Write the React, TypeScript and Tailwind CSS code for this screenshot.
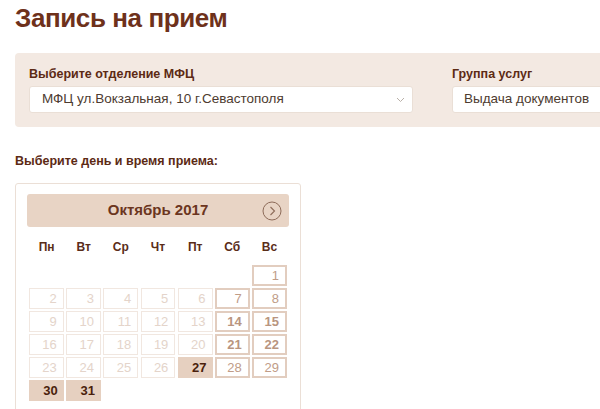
import React from "react";

const weekDays = ["Пн", "Вт", "Ср", "Чт", "Пт", "Сб", "Вс"];

type DayState = "off" | "open" | "strong" | "picked";

// октябрь 2017 начинается с воскресенья
const days: { n: number; s: DayState }[] = [
  { n: 1, s: "open" },
  ...[2, 3, 4, 5, 6].map((n) => ({ n, s: "off" as DayState })),
  { n: 7, s: "open" },
  { n: 8, s: "open" },
  ...[9, 10, 11, 12, 13].map((n) => ({ n, s: "off" as DayState })),
  { n: 14, s: "strong" },
  { n: 15, s: "strong" },
  ...[16, 17, 18, 19, 20].map((n) => ({ n, s: "off" as DayState })),
  { n: 21, s: "strong" },
  { n: 22, s: "strong" },
  ...[23, 24, 25, 26].map((n) => ({ n, s: "off" as DayState })),
  { n: 27, s: "picked" },
  { n: 28, s: "open" },
  { n: 29, s: "open" },
  { n: 30, s: "picked" },
  { n: 31, s: "picked" },
];

const cellClass: Record<DayState, string> = {
  off: "border border-[#f1e7e0] text-[#e4d4ca]",
  open: "border-2 border-[#e2cdbf] text-[#c09c87]",
  strong: "border-2 border-[#e2cdbf] text-[#b99580] font-bold",
  picked: "bg-[#e6d0c0] text-[#4a1f0c] font-bold",
};

const Chevron = () => (
  <svg width="9" height="6" viewBox="0 0 9 6" className="text-[#b9b0a8]">
    <path d="M1 1l3.5 3.5L8 1" fill="none" stroke="currentColor" strokeWidth="1" />
  </svg>
);

const NextIcon = () => (
  <svg width="20" height="20" viewBox="0 0 20 20" className="text-[#8d6b59]">
    <circle cx="10" cy="10" r="9" fill="none" stroke="currentColor" strokeWidth="1" />
    <path d="M8.5 6l4 4-4 4" fill="none" stroke="currentColor" strokeWidth="1.1" />
  </svg>
);

export default function App() {
  return (
    <div
      className="w-[600px] h-[409px] overflow-hidden bg-white pl-[15px]"
      style={{ fontFamily: '"Liberation Sans", Arial, sans-serif' }}
    >
      <h1 className="pt-[1px] text-[26px] leading-[34px] font-bold text-[#6e311b] tracking-[-0.4px]">
        Запись на прием
      </h1>

      <div className="mt-[18px] w-[700px] rounded-[4px] bg-[#f3e9e2] px-[14px] pt-[13px] pb-[14px] flex gap-[39px]">
        <div className="w-[384px] flex flex-col">
          <div className="text-[12.5px] leading-[16px] font-bold text-[#5c2a14]">
            Выберите отделение МФЦ
          </div>
          <div className="mt-[4px] h-[27px] rounded-[3px] bg-white border border-[#eadfd6] flex items-center justify-between pl-[12px] pr-[7px]">
            <span className="text-[13.5px] text-[#4d3b30]">МФЦ ул.Вокзальная, 10 г.Севастополя</span>
            <Chevron />
          </div>
        </div>
        <div className="w-[220px] flex flex-col">
          <div className="text-[12.5px] leading-[16px] font-bold text-[#5c2a14]">Группа услуг</div>
          <div className="mt-[4px] h-[27px] rounded-[3px] bg-white border border-[#eadfd6] flex items-center pl-[11px]">
            <span className="text-[13.5px] text-[#4d3b30]">Выдача документов</span>
          </div>
        </div>
      </div>

      <div className="mt-[26px] text-[12.5px] leading-[16px] font-bold text-[#5c2a14]">
        Выберите день и время приема:
      </div>

      <div className="mt-[14px] w-[286px] rounded-[3px] border border-[#ebdfd6] px-[11px] pt-[10px] pb-[12px]">
        <div className="h-[33px] rounded-[3px] bg-[#e8d4c5] flex items-center justify-center relative">
          <span className="text-[15px] font-bold text-[#6b3520]">Октябрь 2017</span>
          <div className="absolute right-[7px] top-[7px]">
            <NextIcon />
          </div>
        </div>

        <div className="mt-[12px] px-[2px] grid grid-cols-7 gap-x-[2px]">
          {weekDays.map((d) => (
            <div key={d} className="text-center text-[12px] leading-[16px] font-bold text-[#5a2d19]">
              {d}
            </div>
          ))}
        </div>

        <div className="mt-[10px] px-[2px] grid grid-cols-7 gap-x-[2.5px] gap-y-[2px]">
          {Array.from({ length: 6 }).map((_, i) => (
            <div key={"e" + i} />
          ))}
          {days.map((d) => (
            <div
              key={d.n}
              className={`h-[21px] flex items-center justify-end pr-[6px] text-[13px] ${cellClass[d.s]}`}
            >
              {d.n}
            </div>
          ))}
        </div>
      </div>
    </div>
  );
}
